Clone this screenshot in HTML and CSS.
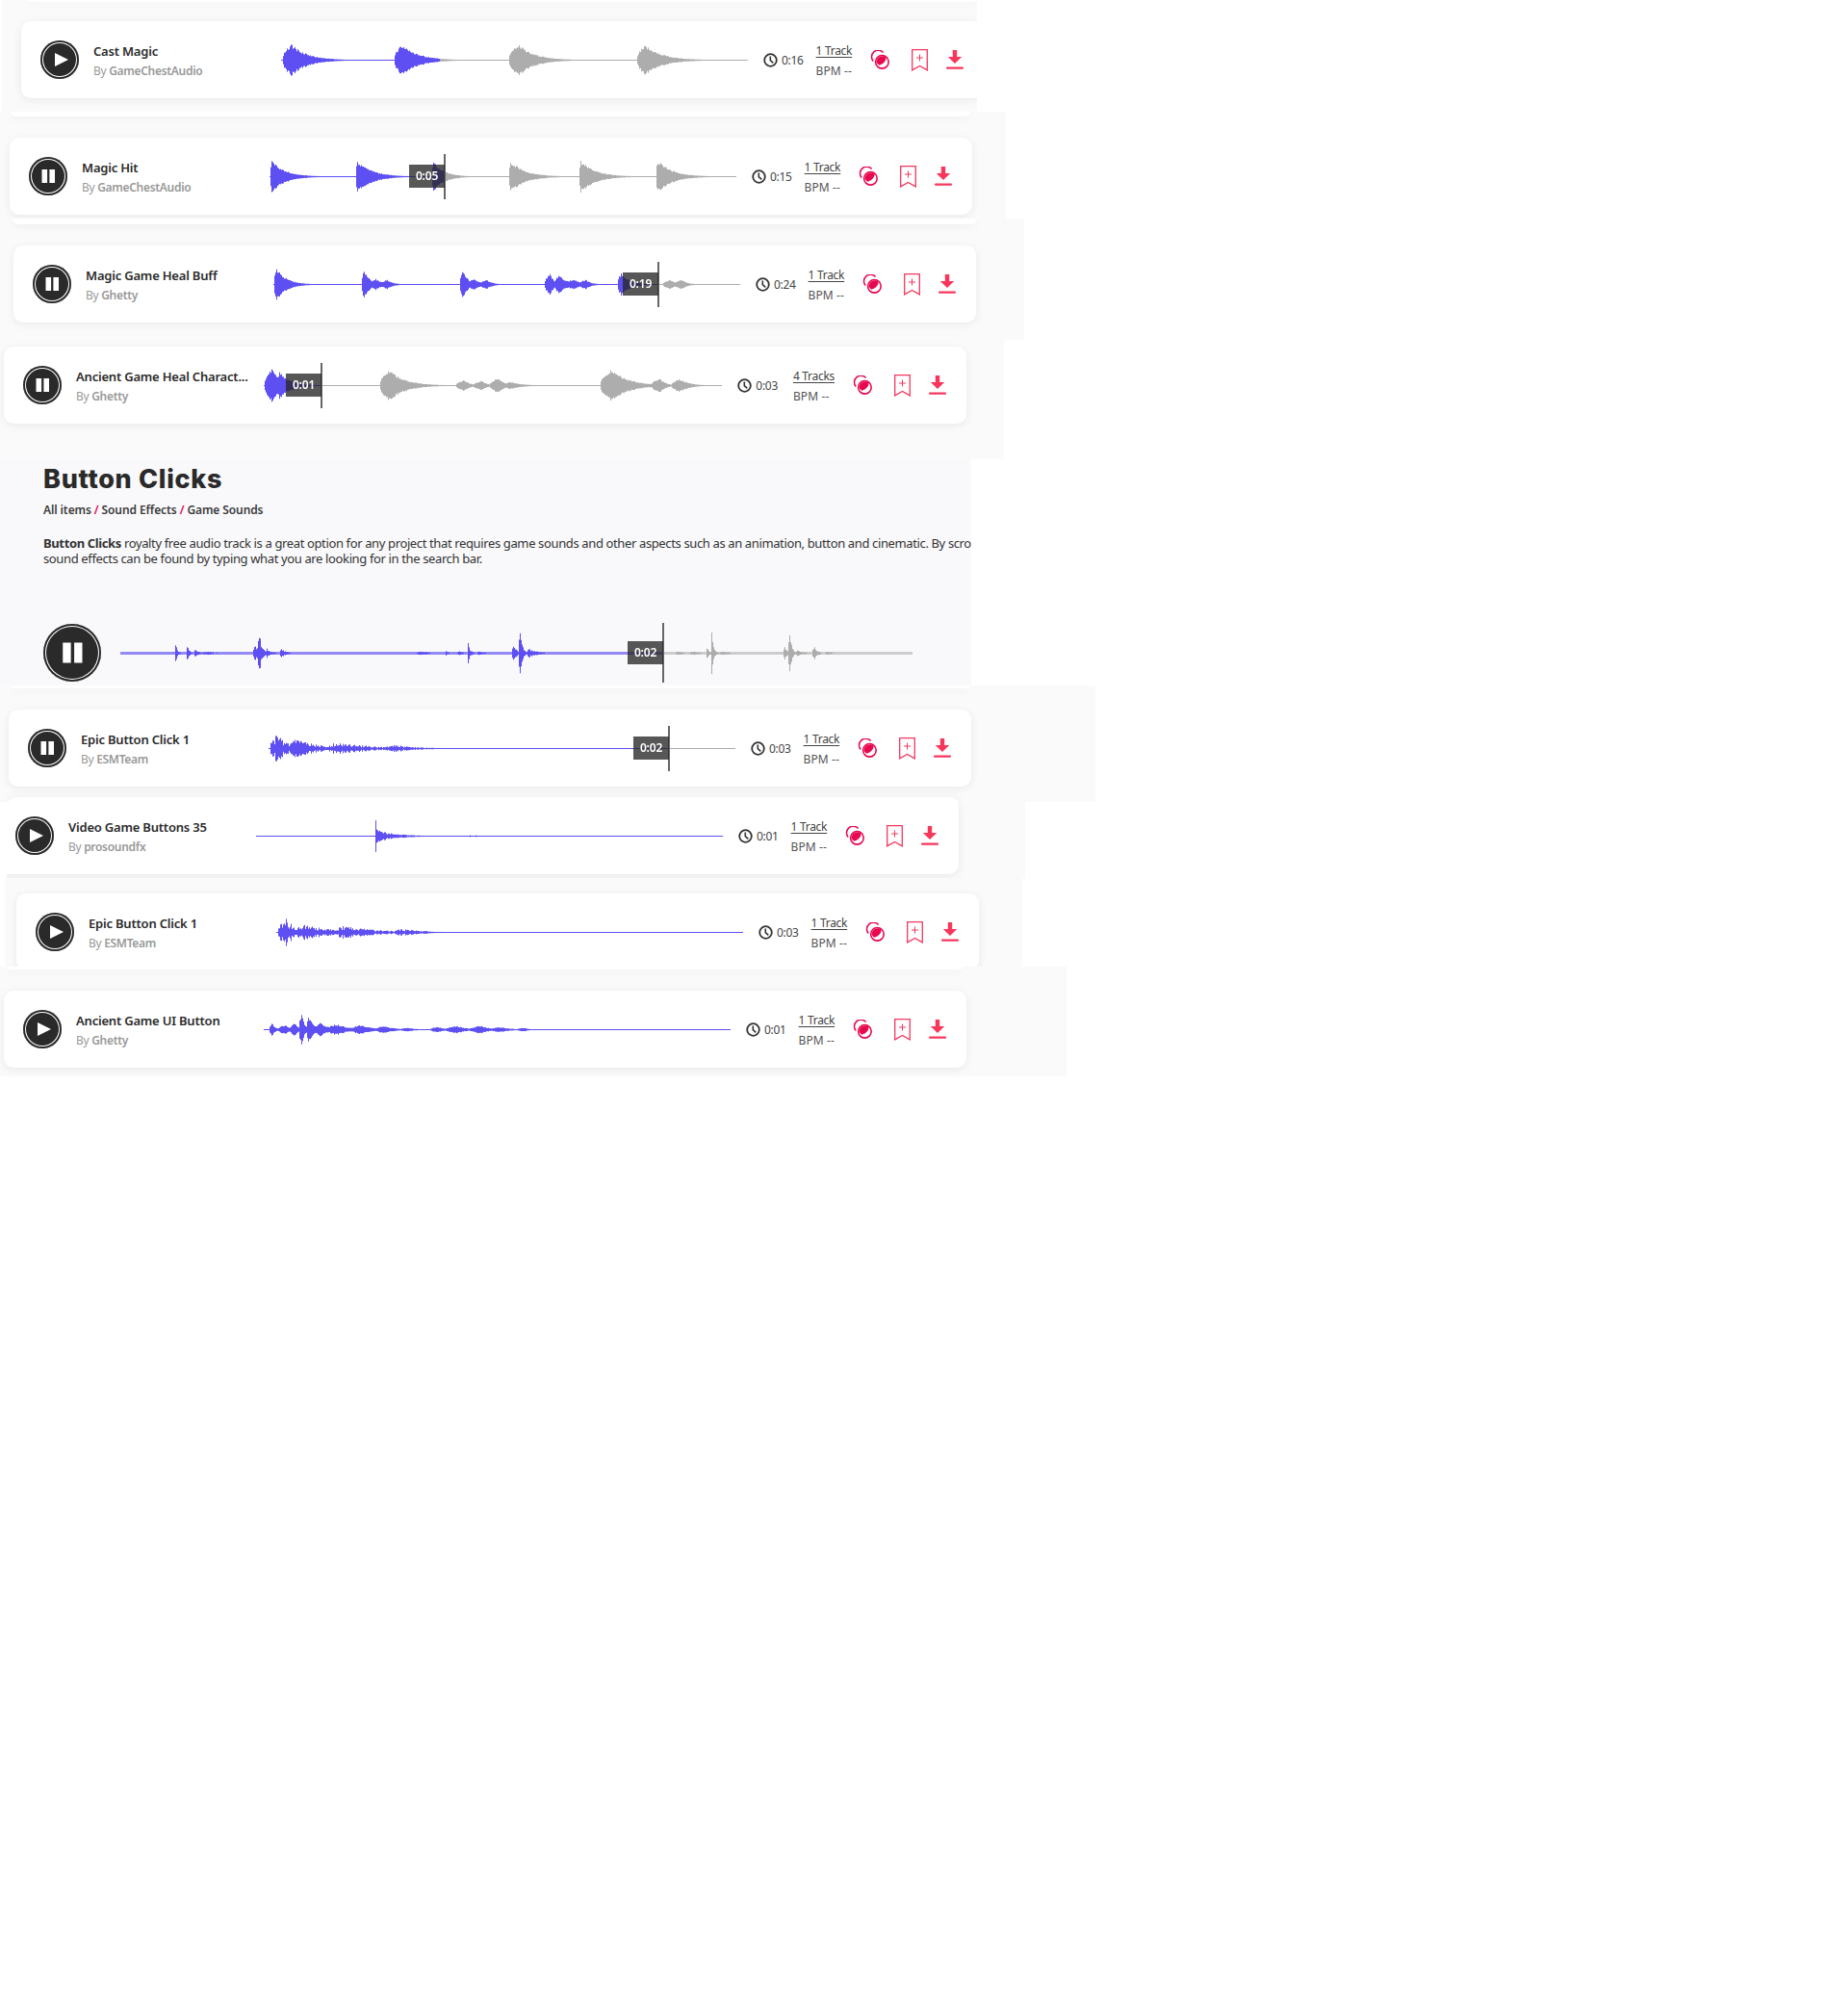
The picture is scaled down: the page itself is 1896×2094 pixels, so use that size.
FILE: index.html
```html
<!DOCTYPE html>
<html lang="en">
<head>
	<meta charset="UTF-8">
	<title>Button Clicks</title>
	<link rel="stylesheet" href="styles.css">
</head>
<body>
	<svg class="defs" width="0" height="0">
		<symbol id="i-play" viewBox="0 0 40 40"><path d="M15 13l14 7-14 7z"/></symbol>
		<symbol id="i-pause" viewBox="0 0 40 40"><path d="M13.5 13h5.6v14h-5.6zM21.4 13H27v14h-5.6z"/></symbol>
		<symbol id="i-clock" viewBox="0 0 15 15"><circle cx="7.5" cy="7.5" r="6.3" fill="none" stroke="#333" stroke-width="1.8"/><path d="M7.3 3.6v4.1l3 2.6" fill="none" stroke="#333" stroke-width="1.6"/></symbol>
		<symbol id="i-stems" viewBox="0 0 20 20"><path d="M13.6 2.6A6.6 6.6 0 0 0 3.200 11.600" fill="none" stroke="#e8084f" stroke-width="1.5"/><circle cx="12.400" cy="12.300" r="6.800" fill="none" stroke="#e8084f" stroke-width="1.600"/><path d="M6.600 12.800a6.200 6.200 0 0 1 9.900-5.300q.6 5.400-7 8.300a6 6 0 0 1-2.900-3z" fill="#e8084f"/></symbol>
		<symbol id="i-mark" viewBox="0 0 17 23"><path d="M.7.7h15.600v21.200l-7.800-4.500-7.800 4.500z" fill="none" stroke="#f4385f" stroke-width="1.300"/><path d="M8.500 5.500v7M5 9h7" stroke="#f4385f" stroke-width="1"/></symbol>
		<symbol id="i-down" viewBox="0 0 18 20"><path d="M6.800 0h4.400v7h5L9 14 1.800 7h5z" fill="#f8365c"/><rect y="17.400" width="18" height="2.400" rx="1" fill="#f8365c"/></symbol>
	</svg>

	<div class="strip strip-a">
		<div class="tail tail-a"></div>
		<div class="card card-a">
			<button class="play"><svg><use href="#i-play"/></svg></button>
			<div class="info"><div class="title">Cast Magic</div><div class="by">By <b>GameChestAudio</b></div></div>
			<div class="wave" data-bursts="10 17 62 9,125 17 62 8,246 17 62 10,378 16 66 9" data-played="165"></div>
			<div class="clock"><svg><use href="#i-clock"/></svg>0:16</div>
			<div class="meta"><a href="#">1 Track</a><span>BPM --</span></div>
			<svg class="ico-stems"><use href="#i-stems"/></svg>
			<svg class="ico-mark"><use href="#i-mark"/></svg>
			<svg class="ico-down"><use href="#i-down"/></svg>
		</div>
	</div>

	<div class="strip strip-b">
		<div class="tail tail-b"></div>
		<div class="card card-b">
			<button class="play"><svg><use href="#i-pause"/></svg></button>
			<div class="info"><div class="title">Magic Hit</div><div class="by">By <b>GameChestAudio</b></div></div>
			<div class="wave" data-bursts="2 17 52 2,91 17 56 2,170 16 40 2,250 17 56 2,323 17 56 2,403 17 56 2" data-played="182">
				<div class="cursor" style="left:182px"><span>0:05</span></div>
			</div>
			<div class="clock"><svg><use href="#i-clock"/></svg>0:15</div>
			<div class="meta"><a href="#">1 Track</a><span>BPM --</span></div>
			<svg class="ico-stems"><use href="#i-stems"/></svg>
			<svg class="ico-mark"><use href="#i-mark"/></svg>
			<svg class="ico-down"><use href="#i-down"/></svg>
		</div>
	</div>

	<div class="strip strip-c">
		<div class="tail tail-c"></div>
		<div class="card card-c">
			<button class="play"><svg><use href="#i-pause"/></svg></button>
			<div class="info"><div class="title">Magic Game Heal Buff</div><div class="by">By <b>Ghetty</b></div></div>
			<div class="wave" data-bursts="3 17 38 3,94 15 22 3,106 6 26 7,118 5 22 7,196 15 22 3,208 6 26 7,221 5 22 7,287 11 18 6,296 10 34 4,312 6 22 8,324 5 22 8,361 12 34 4,412 5 22 8,424 5 22 8" data-played="400">
				<div class="cursor" style="left:400px"><span>0:19</span></div>
			</div>
			<div class="clock"><svg><use href="#i-clock"/></svg>0:24</div>
			<div class="meta"><a href="#">1 Track</a><span>BPM --</span></div>
			<svg class="ico-stems"><use href="#i-stems"/></svg>
			<svg class="ico-mark"><use href="#i-mark"/></svg>
			<svg class="ico-down"><use href="#i-down"/></svg>
		</div>
	</div>

	<div class="strip strip-d">
		<div class="card card-d">
			<button class="play"><svg><use href="#i-pause"/></svg></button>
			<div class="info"><div class="title">Ancient Game Heal Charact...</div><div class="by">By <b>Ghetty</b></div></div>
			<div class="wave" data-bursts="8 17 44 8,16 14 44 4,130 17 60 10,208 6 22 9,226 5 22 9,243 8 26 9,256 4 44 6,361 17 64 12,411 8 22 9,432 7 36 9" data-played="60">
				<div class="cursor" style="left:60px"><span>0:01</span></div>
			</div>
			<div class="clock"><svg><use href="#i-clock"/></svg>0:03</div>
			<div class="meta"><a href="#">4 Tracks</a><span>BPM --</span></div>
			<svg class="ico-stems"><use href="#i-stems"/></svg>
			<svg class="ico-mark"><use href="#i-mark"/></svg>
			<svg class="ico-down"><use href="#i-down"/></svg>
		</div>
	</div>

	<section class="intro">
		<h1>Button Clicks</h1>
		<div class="crumbs">All items <i>/</i> Sound Effects <i>/</i> Game Sounds</div>
		<p class="blurb"><b>Button Clicks</b> royalty free audio track is a great option for any project that requires game sounds and other aspects such as an animation, button and cinematic. By scrolling through our catalog, these<br>sound effects can be found by typing what you are looking for in the search bar.</p>
		<div class="big-player">
			<button class="play play-big"><svg><use href="#i-pause"/></svg></button>
			<div class="wave wave-big" data-bursts="57 12 7 1,69 11 7 1,78 5 10 2,90 2 30 6,144 22 10 2,140 9 18 3,152 5 16 2,167 6 14 2,313 2 30 6,338 3 7 1,352 2 18 3,361 13 8 1,372 2 22 2,415 24 9 2,409 9 10 3,424 5 32 2,580 2 18 4,595 2 22 4,614 22 7 1,609 6 10 1,625 2 24 3,695 24 8 2,690 8 12 2,703 4 18 2,721 7 12 3,734 2 18 2" data-played="564" data-rough="0.5">
				<div class="cursor" style="left:564px"><span>0:02</span></div>
			</div>
		</div>
	</section>

	<div class="strip strip-e">
		<div class="tail tail-e"></div>
		<div class="card card-e">
			<button class="play"><svg><use href="#i-pause"/></svg></button>
			<div class="info"><div class="title">Epic Button Click 1</div><div class="by">By <b>ESMTeam</b></div></div>
			<div class="wave" data-bursts="8 17 40 4,4 11 30 3,28 10 90 8,70 7 130 10,130 4 90 10" data-played="416" data-rough="0.65">
				<div class="cursor" style="left:416px"><span>0:02</span></div>
			</div>
			<div class="clock"><svg><use href="#i-clock"/></svg>0:03</div>
			<div class="meta"><a href="#">1 Track</a><span>BPM --</span></div>
			<svg class="ico-stems"><use href="#i-stems"/></svg>
			<svg class="ico-mark"><use href="#i-mark"/></svg>
			<svg class="ico-down"><use href="#i-down"/></svg>
		</div>
		<div class="sliver"></div>
	</div>

	<div class="strip strip-f">
		<div class="card card-f">
			<button class="play"><svg><use href="#i-play"/></svg></button>
			<div class="info"><div class="title">Video Game Buttons 35</div><div class="by">By <b>prosoundfx</b></div></div>
			<div class="wave" data-bursts="124 17 14 1,130 7 30 1,140 4 60 1,222 1.500 6 1,228 1.500 6 1" data-played="485" data-rough="0.5"></div>
			<div class="clock"><svg><use href="#i-clock"/></svg>0:01</div>
			<div class="meta"><a href="#">1 Track</a><span>BPM --</span></div>
			<svg class="ico-stems"><use href="#i-stems"/></svg>
			<svg class="ico-mark"><use href="#i-mark"/></svg>
			<svg class="ico-down"><use href="#i-down"/></svg>
		</div>
	</div>

	<div class="strip strip-g">
		<div class="card card-g">
			<button class="play"><svg><use href="#i-play"/></svg></button>
			<div class="info"><div class="title">Epic Button Click 1</div><div class="by">By <b>ESMTeam</b></div></div>
			<div class="wave" data-bursts="8 17 40 4,4 11 30 3,28 10 90 8,70 7 130 10,130 4 90 10" data-played="485" data-rough="0.65"></div>
			<div class="clock"><svg><use href="#i-clock"/></svg>0:03</div>
			<div class="meta"><a href="#">1 Track</a><span>BPM --</span></div>
			<svg class="ico-stems"><use href="#i-stems"/></svg>
			<svg class="ico-mark"><use href="#i-mark"/></svg>
			<svg class="ico-down"><use href="#i-down"/></svg>
		</div>
	</div>

	<div class="strip strip-h">
		<div class="tail tail-h"></div>
		<div class="card card-h">
			<button class="play"><svg><use href="#i-play"/></svg></button>
			<div class="info"><div class="title">Ancient Game UI Button</div><div class="by">By <b>Ghetty</b></div></div>
			<div class="wave" data-bursts="8 7 14 3,22 5 20 8,32 7 14 6,39 17 12 3,46 15 20 2,58 8 30 4,75 6 50 10,100 5 50 10,125 4 40 10,150 2 30 10,180 3 30 8,200 4 40 12,225 4 40 12,245 3 40 10,270 2 20 8" data-played="485" data-rough="0.3"></div>
			<div class="clock"><svg><use href="#i-clock"/></svg>0:01</div>
			<div class="meta"><a href="#">1 Track</a><span>BPM --</span></div>
			<svg class="ico-stems"><use href="#i-stems"/></svg>
			<svg class="ico-mark"><use href="#i-mark"/></svg>
			<svg class="ico-down"><use href="#i-down"/></svg>
		</div>
	</div>

	<script src="waveform.js"></script>
</body>
</html>
```

FILE: styles.css
```css
* {
	margin: 0;
	padding: 0;
	box-sizing: border-box;
}

body {
	background: #fff;
	font-family: "Noto Sans", "Open Sans", sans-serif;
	color: #2b2b2b;
}

.defs {
	display: block;
	height: 0;
}

/* strips */
.strip {
	background: #fafafa;
	overflow: hidden;
}
.strip-a { margin-left: 2px; width: 1013px; height: 116px; }
.strip-b { width: 1045px; height: 111px; }
.strip-c { width: 1064px; height: 126px; }
.strip-d { width: 1043px; height: 124px; background: #fafafb; }
.strip-e { width: 1138px; height: 121px; }
.strip-f { margin-left: 7px; width: 1058px; height: 79px; }
.strip-g { margin-left: 5px; width: 1057px; height: 92px; }
.strip-h { width: 1108px; height: 114px; }

.tail {
	background: #fff;
	border-radius: 0 0 10px 10px;
	box-shadow: 0 2px 8px rgba(0, 0, 0, .06);
}
.tail-a { margin-left: 26px; width: 990px; height: 2px; }
.tail-b { margin-left: 11px; width: 997px; height: 5px; }
.tail-c { margin-left: 13px; width: 1002px; height: 6px; }
.tail-e { margin-left: 11px; width: 996px; height: 3px; }
.tail-h { margin-left: 7px; width: 993px; height: 3px; }

.sliver {
	margin: 11px 0 0 7px;
	width: 990px;
	height: 12px;
	background: #fff;
	border-radius: 10px 10px 0 0;
	box-shadow: 0 0 8px rgba(0, 0, 0, .05);
}

/* cards */
.card {
	display: flex;
	align-items: center;
	flex-shrink: 0;
	width: 1000px;
	height: 80px;
	padding: 0 21px 0 20px;
	background: #fff;
	border-radius: 10px;
	box-shadow: 0 2px 10px rgba(0, 0, 0, .07);
}
.card-a { margin: 20px 0 0 20px; }
.card-b { margin: 22px 0 0 10px; }
.card-c { margin: 22px 0 0 14px; }
.card-d { margin: 7px 0 0 4px; }
.card-e { margin: 22px 0 0 9px; }
.card-f { margin: -5px 0 0 -11px; }
.card-g { margin: 16px 0 0 12px; }
.card-h { margin: 22px 0 0 4px; }

.play {
	flex: none;
	width: 40px;
	height: 40px;
	border: 0;
	border-radius: 50%;
	background: #2a2a2a;
	box-shadow: inset 0 0 0 2px #2a2a2a, inset 0 0 0 3px #fff;
}
.play svg {
	display: block;
	width: 100%;
	height: 100%;
	fill: #fff;
}
.play-big {
	width: 60px;
	height: 60px;
}

.info {
	flex: none;
	width: 195px;
	margin: 2px 0 0 15px;
}
.title {
	font-size: 13px;
	font-weight: 600;
	letter-spacing: -.2px;
	line-height: 20px;
	white-space: nowrap;
	color: #2b2b2b;
}
.by {
	margin-top: 1px;
	font-size: 12px;
	letter-spacing: -.3px;
	line-height: 20px;
	color: #999;
}
.by b {
	font-weight: 600;
}

/* waveform */
.wave {
	position: relative;
	flex: 1;
	height: 47px;
}
.wave canvas {
	display: block;
}
.wave-big {
	flex: none;
	width: 823px;
	height: 62px;
	margin-left: 20px;
}
.cursor {
	position: absolute;
	top: 0;
	bottom: 0;
	width: 2px;
	margin-left: -1px;
	background: #666;
}
.cursor span {
	position: absolute;
	top: 50%;
	right: 1px;
	width: 37px;
	height: 24px;
	margin-top: -12px;
	background: rgba(40, 40, 40, .78);
	color: #fff;
	font-size: 12px;
	font-weight: 600;
	letter-spacing: -.2px;
	line-height: 24px;
	text-align: center;
}

.clock {
	display: flex;
	align-items: center;
	flex: none;
	gap: 4px;
	margin-left: 16px;
	font-size: 12px;
	letter-spacing: -.3px;
	color: #444;
}
.clock svg {
	width: 15px;
	height: 15px;
}

.meta {
	display: flex;
	flex-direction: column;
	flex: none;
	margin: 2px 0 0 13px;
	font-size: 12px;
	line-height: 20px;
	color: #555;
}
.card-d .meta {
	margin-left: 16px;
}
.meta a {
	color: #444;
	letter-spacing: -.3px;
	text-decoration: underline;
	text-underline-offset: 2px;
}
.meta span {
	margin-top: 1px;
	letter-spacing: .1px;
}

.ico-stems { flex: none; width: 20px; height: 20px; margin-left: 19px; }
.ico-mark { flex: none; width: 17px; height: 23px; margin-left: 23px; }
.ico-down { flex: none; width: 18px; height: 20px; margin-left: 19px; }

/* heading block */
.intro {
	width: 1009px;
	height: 235px;
	padding: 5px 0 0 45px;
	background: #f9f9fb;
	overflow: hidden;
}
.intro h1 {
	font-family: Inter, "Noto Sans", sans-serif;
	font-size: 27px;
	font-weight: 800;
	letter-spacing: .7px;
	line-height: 32px;
	color: #2a2a2a;
}
.crumbs {
	margin-top: 7px;
	font-size: 12px;
	font-weight: 600;
	letter-spacing: -.1px;
	line-height: 18px;
	color: #3c3c3c;
}
.crumbs i {
	font-style: normal;
	color: #e8084f;
}
.blurb {
	width: 1300px;
	margin-top: 17px;
	font-size: 13px;
	letter-spacing: -.37px;
	line-height: 16px;
	color: #333;
}
.big-player {
	display: flex;
	align-items: center;
	margin-top: 59px;
}
```

FILE: waveform.js
```js
'use strict';
var PURPLE = '#5d4ff2';
var GREY = '#adadad';

function random(seed) {
	return function () {
		seed = (seed * 16807) % 2147483647;
		return seed / 2147483647;
	};
}

function parseBursts(text) {
	return text.split(',').map(function (part) {
		var n = part.trim().split(' ').map(Number);
		return { x: n[0], amp: n[1], len: n[2], rise: n[3] || 4 };
	});
}

function envelope(bursts, x) {
	var top = 0;
	bursts.forEach(function (b) {
		var d = x - b.x;
		var v = 0;
		if (d >= 0) {
			v = b.amp * Math.exp(-3.6 * d / b.len);
		} else if (d > -b.rise) {
			v = b.amp * Math.sqrt(1 + d / b.rise);
		}
		if (v > top) top = v;
	});
	return top;
}

function drawWave(el, index) {
	var w = el.clientWidth;
	var h = el.clientHeight;
	var canvas = document.createElement('canvas');
	canvas.width = w;
	canvas.height = h;
	el.insertBefore(canvas, el.firstChild);

	var ctx = canvas.getContext('2d');
	var bursts = parseBursts(el.getAttribute('data-bursts'));
	var played = Number(el.getAttribute('data-played'));
	var rough = Number(el.getAttribute('data-rough') || 0.25);
	var big = el.classList.contains('wave-big');
	var mid = Math.floor(h / 2);
	var rand = random(index * 977 + 131);

	// base line, the big player has a thicker and paler one
	ctx.globalAlpha = big ? 0.65 : 1;
	ctx.fillStyle = PURPLE;
	ctx.fillRect(0, mid - (big ? 1 : 0), played, big ? 3 : 1);
	ctx.globalAlpha = big ? 0.6 : 1;
	ctx.fillStyle = GREY;
	ctx.fillRect(played, mid - (big ? 1 : 0), w - played, big ? 3 : 1);
	ctx.globalAlpha = 1;

	for (var x = 0; x < w; x++) {
		var amp = envelope(bursts, x) * (1 - rough * rand());
		if (amp < 0.5) continue;
		ctx.fillStyle = x < played ? PURPLE : GREY;
		ctx.fillRect(x, mid + 0.5 - amp, 1, amp * 2);
	}
}

Array.prototype.forEach.call(document.querySelectorAll('.wave'), drawWave);
```
